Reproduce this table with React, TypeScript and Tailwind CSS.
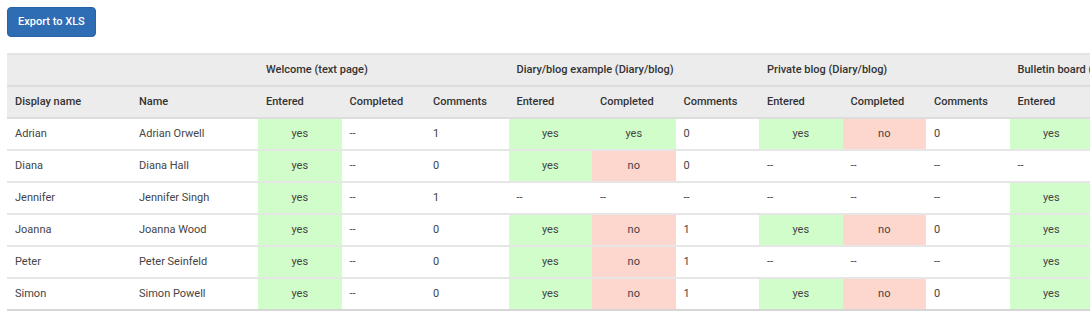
import React from 'react'

type Cell = string

const groups = [
  'Welcome (text page)',
  'Diary/blog example (Diary/blog)',
  'Private blog (Diary/blog)',
  'Bulletin board (Bulletin board)',
]

const rows: { display: string; name: string; cells: Cell[] }[] = [
  { display: 'Adrian', name: 'Adrian Orwell', cells: ['yes', '--', '1', 'yes', 'yes', '0', 'yes', 'no', '0', 'yes', 'yes', '0'] },
  { display: 'Diana', name: 'Diana Hall', cells: ['yes', '--', '0', 'yes', 'no', '0', '--', '--', '--', '--', '--', '--'] },
  { display: 'Jennifer', name: 'Jennifer Singh', cells: ['yes', '--', '1', '--', '--', '--', '--', '--', '--', 'yes', 'yes', '0'] },
  { display: 'Joanna', name: 'Joanna Wood', cells: ['yes', '--', '0', 'yes', 'no', '1', 'yes', 'no', '0', 'yes', 'yes', '0'] },
  { display: 'Peter', name: 'Peter Seinfeld', cells: ['yes', '--', '0', 'yes', 'no', '1', '--', '--', '--', 'yes', 'yes', '0'] },
  { display: 'Simon', name: 'Simon Powell', cells: ['yes', '--', '0', 'yes', 'no', '1', 'yes', 'no', '0', 'yes', 'yes', '0'] },
]

function ValueCell({ v }: { v: Cell }) {
  if (v === 'yes') return <td className="h-8 bg-[#d1fdca] text-center border-b-2 border-[#e6e6e6]">yes</td>
  if (v === 'no') return <td className="h-8 bg-[#fdd6cd] text-center border-b-2 border-[#e6e6e6]">no</td>
  return <td className="h-8 px-2 border-b-2 border-[#e6e6e6]">{v}</td>
}

export default function App() {
  return (
    <div className="w-[1090px] h-[317px] overflow-hidden bg-white font-['Roboto',sans-serif] text-[11px] text-[#444]">
      <div className="px-[7px] pt-[7px]">
        <button className="h-[30px] px-[10px] rounded-[4px] bg-[#2e6db4] text-white text-[11px] font-medium border border-[#2a63a5]">
          Export to XLS
        </button>
      </div>
      <div className="ml-[7px] mt-[16px]">
        <table className="table-fixed border-collapse w-[1253px]">
          <colgroup>
            <col className="w-[124px]" />
            <col className="w-[127px]" />
            {Array.from({ length: 12 }).map((_, i) => (
              <col key={i} className="w-[83.5px]" />
            ))}
          </colgroup>
          <thead className="bg-[#ececec] text-[#333]">
            <tr className="border-t-2 border-[#e3e3e3]">
              <th className="h-8 border-b-2 border-[#dddddd]"></th>
              <th className="h-8 border-b-2 border-[#dddddd]"></th>
              {groups.map(g => (
                <th key={g} colSpan={3} className="h-8 px-2 text-left font-medium whitespace-nowrap border-b-2 border-[#dddddd]">
                  {g}
                </th>
              ))}
            </tr>
            <tr>
              <th className="h-8 px-2 text-left font-medium border-b-2 border-[#dddddd]">Display name</th>
              <th className="h-8 px-2 text-left font-medium border-b-2 border-[#dddddd]">Name</th>
              {groups.map(g => (
                <React.Fragment key={g}>
                  <th className="h-8 px-2 text-left font-medium border-b-2 border-[#dddddd]">Entered</th>
                  <th className="h-8 px-2 text-left font-medium border-b-2 border-[#dddddd]">Completed</th>
                  <th className="h-8 px-2 text-left font-medium border-b-2 border-[#dddddd]">Comments</th>
                </React.Fragment>
              ))}
            </tr>
          </thead>
          <tbody>
            {rows.map((r, i) => (
              <tr key={r.display} className={i === rows.length - 1 ? '[&>td]:border-[#d6d6d6]' : ''}>
                <td className="h-8 px-2 border-b-2 border-[#e6e6e6]">{r.display}</td>
                <td className="h-8 px-2 border-b-2 border-[#e6e6e6]">{r.name}</td>
                {r.cells.map((v, j) => (
                  <ValueCell key={j} v={v} />
                ))}
              </tr>
            ))}
          </tbody>
        </table>
      </div>
    </div>
  )
}
